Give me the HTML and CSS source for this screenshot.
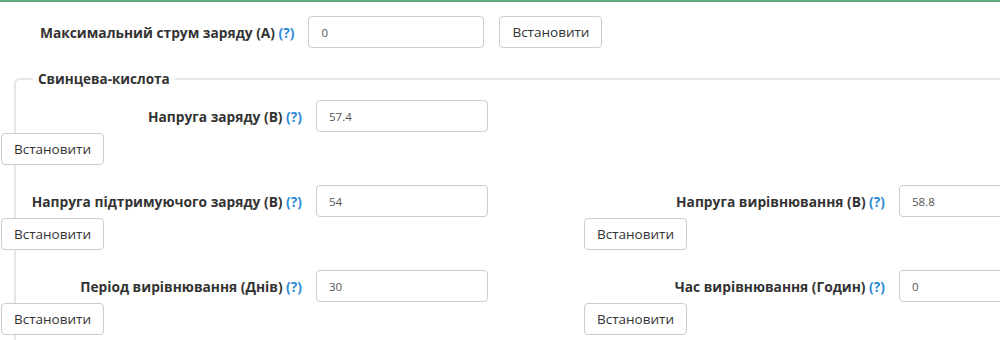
FILE: index.html
```html
<!DOCTYPE html>
<html lang="uk">
<head>
    <meta charset="UTF-8">
    <meta name="viewport" content="width=device-width, initial-scale=1.0">
    <title>Налаштування заряду</title>
    <link rel="stylesheet" href="styles.css">
</head>
<body>
    <div class="page">
        <div class="top-row">
            <label class="field-label">Максимальний струм заряду (А) <a class="help">(?)</a></label>
            <input class="field-input wide" type="text" value="0">
            <button class="set-button">Встановити</button>
        </div>

        <fieldset class="group">
            <legend>Свинцева-кислота</legend>
            <div class="fields">
                <div class="field">
                    <label class="field-label">Напруга заряду (В) <a class="help">(?)</a></label>
                    <input class="field-input" type="text" value="57.4">
                    <button class="set-button">Встановити</button>
                </div>
                <div class="field"></div>

                <div class="field">
                    <label class="field-label">Напруга підтримуючого заряду (В) <a class="help">(?)</a></label>
                    <input class="field-input" type="text" value="54">
                    <button class="set-button">Встановити</button>
                </div>
                <div class="field">
                    <label class="field-label">Напруга вирівнювання (В) <a class="help">(?)</a></label>
                    <input class="field-input" type="text" value="58.8">
                    <button class="set-button">Встановити</button>
                </div>

                <div class="field">
                    <label class="field-label">Період вирівнювання (Днів) <a class="help">(?)</a></label>
                    <input class="field-input" type="text" value="30">
                    <button class="set-button">Встановити</button>
                </div>
                <div class="field">
                    <label class="field-label">Час вирівнювання (Годин) <a class="help">(?)</a></label>
                    <input class="field-input" type="text" value="0">
                    <button class="set-button">Встановити</button>
                </div>
            </div>
        </fieldset>
    </div>
</body>
</html>
```

FILE: styles.css
```css
body {
    margin: 0;
    font-family: "Open Sans", Arial, sans-serif;
    font-size: 13.5px;
    color: #333;
    background-color: #fff;
    overflow: hidden;
}
.page {
    border-top: 2px solid #5fab7f;
    width: 1000px;
    height: 338px;
    overflow: hidden;
}
.top-row {
    display: flex;
    align-items: center;
    margin-top: 14px;
    padding-left: 40px;
}
.field-label {
    font-size: 13.75px;
    font-weight: bold;
    color: #333;
    white-space: nowrap;
}
.help {
    color: #2b8ad6;
}
.top-row .field-label {
    margin-right: 14px;
}
.field-input {
    box-sizing: border-box;
    height: 32px;
    width: 172px;
    padding: 6px 12px;
    border: 1px solid #ccc;
    border-radius: 4px;
    font-family: "Open Sans", Arial, sans-serif;
    font-size: 11.5px;
    color: #555;
    background-color: #fff;
}
.field-input.wide {
    width: 176px;
}
.set-button {
    box-sizing: border-box;
    height: 32px;
    padding: 6px 12px;
    border: 1px solid #ccc;
    border-radius: 4px;
    background-color: #fff;
    font-family: "Open Sans", Arial, sans-serif;
    font-size: 13.5px;
    color: #333;
    cursor: pointer;
}
.top-row .set-button {
    margin-left: 15px;
}
.group {
    width: 1200px;
    margin: 22px 0 0 14px;
    padding: 0 0 40px;
    border: 2px solid #e6e6e6;
    border-radius: 6px 0 0 0;
}
.group legend {
    margin-left: 17px;
    padding: 0 5px;
    font-weight: bold;
    color: #333;
}
.fields {
    display: grid;
    grid-template-columns: 583px 583px;
    row-gap: 20px;
    margin-left: -15px;
    padding-top: 12px;
}
.field {
    display: grid;
    grid-template-columns: 315px 172px;
    align-items: center;
    row-gap: 1px;
}
.field .field-label {
    text-align: right;
    padding-right: 14px;
}
.field .set-button {
    grid-column: 1;
    justify-self: start;
}
```
